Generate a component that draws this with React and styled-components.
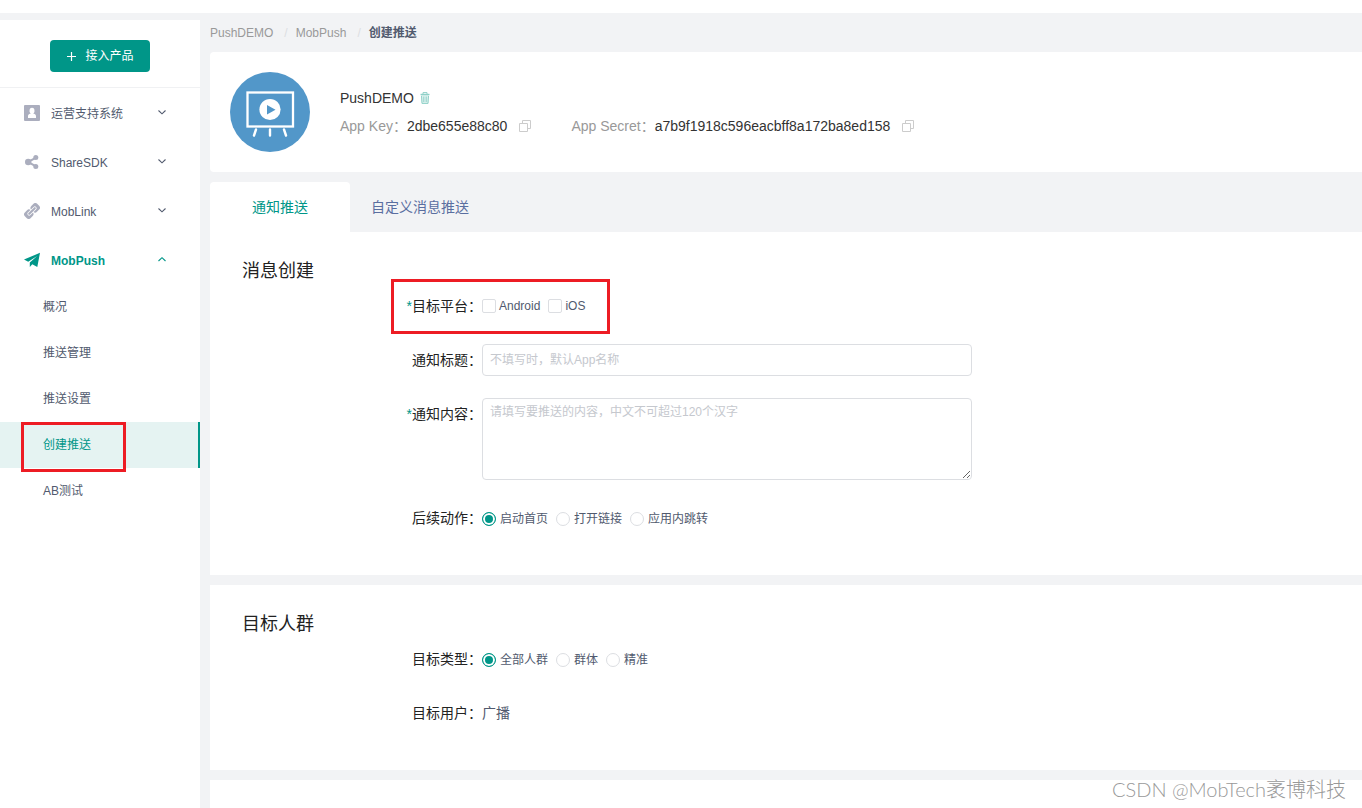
import React, { useState } from "react";
import styled, { createGlobalStyle, css } from "styled-components";

const teal = "#009688";
const slate = "#515a6e";

const GlobalStyle = createGlobalStyle`
  * { box-sizing: border-box; }
  body {
    margin: 0;
    background: #f2f3f5;
    color: ${slate};
    font: 12px/18px "Liberation Sans", "Noto Sans CJK SC", sans-serif;
  }
  button, input, textarea { font: inherit; }
  a { color: inherit; text-decoration: none; }
`;

const Page = styled.div`
  position: relative;
  display: flex;
  flex-direction: column;
  min-height: 100vh;
`;

const TopBar = styled.header`
  height: 13px;
  background: #fff;
`;

const Columns = styled.div`
  flex: 1;
  display: grid;
  grid-template-columns: 200px minmax(0, 1fr);
  column-gap: 10px;
  padding-top: 7px;
`;

const Sidebar = styled.aside`
  background: #fff;
`;

const SidebarTop = styled.div`
  display: flex;
  justify-content: center;
  padding: 20px 0 15px;
  border-bottom: 1px solid #f0f1f3;
`;

const AddButton = styled.button`
  display: flex;
  align-items: center;
  justify-content: center;
  gap: 9px;
  width: 100px;
  height: 32px;
  padding: 0 0 0 1px;
  border: 0;
  border-radius: 4px;
  background: ${teal};
  color: #fff;
`;

const MenuButton = styled.button`
  display: flex;
  align-items: center;
  width: 100%;
  height: 49px;
  padding: 0 33px 0 24px;
  border: 0;
  background: none;
  color: ${(p) => (p.$open ? teal : slate)};
  font-weight: ${(p) => (p.$open ? 700 : 400)};
  text-align: left;
`;

const MenuIcon = styled.svg`
  width: 16px;
  height: 16px;
  margin-right: 11px;
  color: ${(p) => (p.$open ? teal : "#abaebe")};
`;

const MenuName = styled.span`
  flex: 1;
  padding-top: 2px;
`;

const Chevron = styled.svg`
  width: 10px;
  height: 10px;
  color: ${(p) => (p.$open ? teal : slate)};
`;

const SubLink = styled.a`
  position: relative;
  display: flex;
  align-items: center;
  height: 46px;
  padding-left: 43px;
  ${(p) =>
    p.$active &&
    css`
      background: #e5f3f2;
      border-right: 2px solid ${teal};
      color: ${teal};
    `}
`;

const Highlight = styled.span`
  position: absolute;
  top: ${(p) => p.$top}px;
  left: ${(p) => p.$left}px;
  width: ${(p) => p.$width}px;
  height: ${(p) => p.$height}px;
  border: 3px solid #ed1c24;
  pointer-events: none;
  z-index: 1;
`;

const Main = styled.main`
  display: flex;
  flex-direction: column;
`;

const Crumbs = styled.nav`
  display: flex;
  height: 32px;
  padding-top: 4px;
  color: #999;
`;

const Slash = styled.span`
  margin: 0 8px 0 11px;
  color: #dcdee2;
`;

const CurrentCrumb = styled.span`
  color: ${slate};
  font-weight: 700;
`;

const AppCard = styled.section`
  display: flex;
  gap: 30px;
  padding: 20px;
  border-radius: 4px 0 0 4px;
  background: #fff;
  color: #333;
  font-size: 14px;
  line-height: 28px;
`;

const AppLogo = styled.svg`
  width: 80px;
  height: 80px;
`;

const AppInfo = styled.div`
  padding-top: 12px;
`;

const AppLine = styled.div`
  display: flex;
  align-items: center;
  height: 28px;
`;

const KeyLabel = styled.span`
  color: #999;
`;

const KeyValue = styled.span`
  margin-right: 12px;
`;

const IconButton = styled.button`
  display: flex;
  padding: 0;
  border: 0;
  background: none;
  color: ${(p) => p.$color};
  margin-left: ${(p) => p.$before || 0}px;
  margin-right: ${(p) => p.$after || 0}px;
`;

const Tabs = styled.div`
  display: flex;
  margin-top: 10px;
`;

const Tab = styled.button`
  width: 140px;
  height: 50px;
  padding: 0;
  border: 0;
  border-radius: 4px 4px 0 0;
  background: ${(p) => (p.$active ? "#fff" : "transparent")};
  color: ${(p) => (p.$active ? teal : "#5a6ea0")};
  font-size: 14px;
`;

const Panel = styled.section`
  margin-bottom: 10px;
  padding: 25px 32px 41px 0;
  background: #fff;
  ${(p) =>
    p.$last &&
    css`
      flex: 1;
      margin-bottom: 0;
      padding: 0;
    `}
`;

const PanelTitle = styled.h2`
  margin: 0 0 5px;
  padding-left: 32px;
  color: #222;
  font-size: 18px;
  font-weight: 400;
  line-height: 28px;
`;

const Rows = styled.div`
  display: grid;
  row-gap: 22px;
`;

const Row = styled.div`
  position: relative;
  display: grid;
  grid-template-columns: 272px minmax(0, 490px);
  align-items: start;
`;

const rowLabel = css`
  color: #222;
  font-size: 14px;
  line-height: 32px;
  text-align: right;
`;

const FieldLabel = styled.label`
  ${rowLabel}
`;

const GroupLabel = styled.span`
  ${rowLabel}
`;

const Star = styled.span`
  color: ${teal};
`;

const fieldBox = css`
  display: block;
  width: 100%;
  padding: 4px 7px;
  border: 1px solid #dcdee2;
  border-radius: 4px;
  background: #fff;
  color: ${slate};
  outline: none;
  &::placeholder { color: #c5c8ce; opacity: 1; }
`;

const TextInput = styled.input`
  ${fieldBox}
  height: 32px;
`;

const TextArea = styled.textarea`
  ${fieldBox}
  height: 82px;
  resize: vertical;
`;

const Choices = styled.div`
  display: flex;
  align-items: center;
  gap: 8px;
  height: 32px;
  padding-top: ${(p) => (p.role === "radiogroup" ? 2 : 0)}px;
`;

const Choice = styled.label`
  display: flex;
  align-items: center;
  gap: ${(p) => (p.$radio ? 4 : 3)}px;
`;

const Tick = styled.input`
  appearance: none;
  width: 14px;
  height: 14px;
  margin: 0;
  border: 1px solid #dcdee2;
  border-radius: ${(p) => (p.type === "radio" ? "50%" : "2px")};
  background: #fff;
  &:checked {
    border-color: ${teal};
    background: ${teal};
    box-shadow: inset 0 0 0 2px #fff;
  }
`;

const PlainValue = styled.span`
  font-size: 14px;
  line-height: 32px;
`;

const Watermark = styled.div`
  position: absolute;
  right: 16px;
  bottom: 4px;
  color: #999;
  font: 20px/30px Lato, "Noto Sans CJK SC", sans-serif;
  font-weight: 300;
  text-shadow: 1px 1px 0 #fff;
`;

const icons = {
  user: (
    <>
      <rect width="16" height="16" rx="1" fill="currentColor" />
      <ellipse cx="8" cy="5.700" rx="2.500" ry="2.900" fill="#fff" />
      <path d="M4 13v-2c0-1.500 1.500-2 3-2.700V7h2v1.300c1.500.7 3 1.200 3 2.700v2z" fill="#fff" />
    </>
  ),
  share: (
    <>
      <path d="M12 3.700 4 8l8 4.300" fill="none" stroke="currentColor" strokeWidth="2" />
      <circle cx="4.200" cy="8" r="3.200" fill="currentColor" />
      <circle cx="11.800" cy="3.500" r="2.500" fill="currentColor" />
      <circle cx="11.800" cy="12.500" r="2.500" fill="currentColor" />
    </>
  ),
  link: (
    <g transform="rotate(-45 8 8)">
      <rect x="-.7" y="4" width="8.300" height="8" rx="2.600" fill="currentColor" />
      <rect x="8.400" y="4" width="8.300" height="8" rx="2.600" fill="currentColor" />
      <path d="M4 8h8" stroke="#fff" strokeWidth="3.600" strokeLinecap="round" />
      <path d="M4 8h8" stroke="currentColor" strokeWidth="2" strokeLinecap="round" />
    </g>
  ),
  push: (
    <path
      d="M16 .8 0 7.600l4.200 2.200L13.200 4l-7.400 6.600V15l2.500-2.800 5 2.800z"
      fill="currentColor"
    />
  ),
};

const products = [
  { name: "运营支持系统", icon: "user" },
  { name: "ShareSDK", icon: "share" },
  { name: "MobLink", icon: "link" },
  { name: "MobPush", icon: "push", open: true },
];

const subPages = ["概况", "推送管理", "推送设置", "创建推送", "AB测试"];

const colon = "\uFF1A";

function CopyIcon() {
  return (
    <svg width="12" height="12" viewBox="0 0 12 12" fill="none" stroke="currentColor">
      <path d="M.5 3.500h8v8h-8z" />
      <path d="M3.500 3V.5h8v8H9" />
    </svg>
  );
}

function TrashIcon() {
  return (
    <svg width="10" height="12" viewBox="0 0 10 12" fill="none" stroke="currentColor">
      <path d="M3 2V.6h4V2" />
      <path d="M.5 2.500h9" strokeWidth="1.400" />
      <path d="M1 3h8l-.7 8.500H1.700z" fill="currentColor" fillOpacity=".3" stroke="none" />
      <path d="M1.500 4l.5 7.400h6L8.500 4M3.800 4.500v5.500M6.200 4.500v5.500" />
    </svg>
  );
}

function RadioGroup({ name, label, options }) {
  const [value, setValue] = useState(options[0]);
  return (
    <Choices role="radiogroup" aria-label={label}>
      {options.map((option) => (
        <Choice key={option} $radio>
          <Tick
            type="radio"
            name={name}
            checked={value === option}
            onChange={() => setValue(option)}
          />
          {option}
        </Choice>
      ))}
    </Choices>
  );
}

export default function App() {
  return (
    <Page>
      <GlobalStyle />
      <TopBar />
      <Columns>
        <Sidebar>
          <SidebarTop>
            <AddButton type="button">
              <svg width="9" height="9" viewBox="0 0 9 9" stroke="#fff" strokeWidth="1.200">
                <path d="M4.500 0v9M0 4.500h9" />
              </svg>
              接入产品
            </AddButton>
          </SidebarTop>
          {products.map(({ name, icon, open }) => (
            <MenuButton key={name} type="button" $open={open} aria-expanded={!!open}>
              <MenuIcon viewBox="0 0 16 16" $open={open}>
                {icons[icon]}
              </MenuIcon>
              <MenuName>{name}</MenuName>
              <Chevron viewBox="0 0 10 10" $open={open}>
                <path
                  d={open ? "M1.500 6 5 2.700 8.500 6" : "M1.500 2.500 5 5.800 8.500 2.500"}
                  fill="none"
                  stroke="currentColor"
                  strokeWidth="1.100"
                />
              </Chevron>
            </MenuButton>
          ))}
          {subPages.map((page) => (
            <SubLink key={page} href="#" $active={page === "创建推送"}>
              {page}
              {page === "创建推送" && <Highlight $top={0} $left={21} $width={105} $height={50} />}
            </SubLink>
          ))}
        </Sidebar>
        <Main>
          <Crumbs>
            <a href="#">PushDEMO</a>
            <Slash>/</Slash>
            <a href="#">MobPush</a>
            <Slash>/</Slash>
            <CurrentCrumb>创建推送</CurrentCrumb>
          </Crumbs>
          <AppCard>
            <AppLogo viewBox="0 0 80 80" fill="none" stroke="#fff">
              <circle cx="40" cy="40" r="40" fill="#5297c9" stroke="none" />
              <rect x="17.500" y="20.500" width="45.500" height="34" strokeWidth="2.300" />
              <circle cx="40" cy="37.500" r="10.600" fill="#fff" stroke="none" />
              <path d="M37 33v9.500l8.500-4.700z" fill="#5297c9" stroke="none" />
              <path d="M26 57.500 24 63.500M40 57.500v6M54 57.500l2 6" strokeWidth="2.400" strokeLinecap="round" />
            </AppLogo>
            <AppInfo>
              <AppLine>
                PushDEMO
                <IconButton type="button" aria-label="删除" $color="#8fd0c8" $before={6}>
                  <TrashIcon />
                </IconButton>
              </AppLine>
              <AppLine>
                <KeyLabel>App Key{colon}</KeyLabel>
                <KeyValue>2dbe655e88c80</KeyValue>
                <IconButton type="button" aria-label="复制 App Key" $color="#ccc" $after={40}>
                  <CopyIcon />
                </IconButton>
                <KeyLabel>App Secret{colon}</KeyLabel>
                <KeyValue>a7b9f1918c596eacbff8a172ba8ed158</KeyValue>
                <IconButton type="button" aria-label="复制 App Secret" $color="#ccc">
                  <CopyIcon />
                </IconButton>
              </AppLine>
            </AppInfo>
          </AppCard>
          <Tabs role="tablist">
            <Tab type="button" role="tab" aria-selected="true" $active>
              通知推送
            </Tab>
            <Tab type="button" role="tab" aria-selected="false">
              自定义消息推送
            </Tab>
          </Tabs>
          <Panel>
            <PanelTitle>消息创建</PanelTitle>
            <Rows>
              <Row>
                <GroupLabel>
                  <Star>*</Star>目标平台{colon}
                </GroupLabel>
                <Choices role="group" aria-label="目标平台">
                  <Choice>
                    <Tick type="checkbox" />
                    Android
                  </Choice>
                  <Choice>
                    <Tick type="checkbox" />
                    iOS
                  </Choice>
                </Choices>
                <Highlight $top={-11} $left={181} $width={219} $height={55} />
              </Row>
              <Row>
                <FieldLabel htmlFor="push-title">通知标题{colon}</FieldLabel>
                <TextInput id="push-title" type="text" placeholder={"不填写时\uFF0C默认App名称"} />
              </Row>
              <Row>
                <FieldLabel htmlFor="push-content">
                  <Star>*</Star>通知内容{colon}
                </FieldLabel>
                <TextArea
                  id="push-content"
                  placeholder={"请填写要推送的内容\uFF0C中文不可超过120个汉字"}
                />
              </Row>
              <Row>
                <GroupLabel>后续动作{colon}</GroupLabel>
                <RadioGroup
                  name="action"
                  label="后续动作"
                  options={["启动首页", "打开链接", "应用内跳转"]}
                />
              </Row>
            </Rows>
          </Panel>
          <Panel>
            <PanelTitle>目标人群</PanelTitle>
            <Rows>
              <Row>
                <GroupLabel>目标类型{colon}</GroupLabel>
                <RadioGroup name="audience" label="目标类型" options={["全部人群", "群体", "精准"]} />
              </Row>
              <Row>
                <GroupLabel>目标用户{colon}</GroupLabel>
                <PlainValue>广播</PlainValue>
              </Row>
            </Rows>
          </Panel>
          <Panel $last />
        </Main>
      </Columns>
      <Watermark>CSDN @MobTech袤博科技</Watermark>
    </Page>
  );
}
